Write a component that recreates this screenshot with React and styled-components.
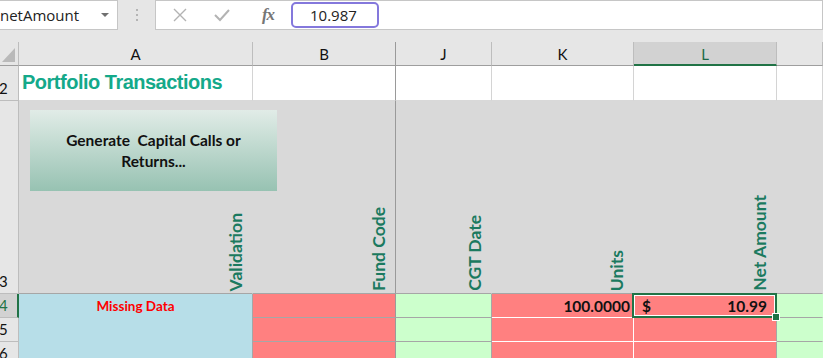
import React from 'react';
import styled, { createGlobalStyle } from 'styled-components';

const GlobalStyle = createGlobalStyle`
  html, body {
    margin: 0;
    padding: 0;
    background: #e6e6e6;
    overflow: hidden;
  }
  body {
    font-family: Lato, "Liberation Sans", sans-serif;
  }
`;

const Page = styled.div`
  width: 823px;
  height: 358px;
  overflow: hidden;
  background: #e6e6e6;
`;

const Toolbar = styled.div`
  height: 42px;
  box-sizing: border-box;
  padding-bottom: 12px;
`;

const FormulaBar = styled.div`
  display: flex;
  height: 30px;
`;

const NameBox = styled.div`
  width: 119px;
  margin-left: -1px;
  box-sizing: border-box;
  border: 1px solid #c6c6c6;
  background: #fff;
  display: flex;
  align-items: center;
  justify-content: space-between;
  padding-right: 8px;
  font-family: "Open Sans", "Noto Sans", sans-serif;
  font-size: 15px;
  color: #222;
`;

const DropArrow = styled.span`
  width: 0;
  height: 0;
  border-left: 4px solid transparent;
  border-right: 4px solid transparent;
  border-top: 4px solid #707070;
`;

const Grip = styled.div`
  width: 37px;
  display: flex;
  flex-direction: column;
  align-items: center;
  justify-content: center;
  gap: 3px;

  span {
    width: 2px;
    height: 2px;
    background: #b4b4b4;
  }
`;

const FormulaArea = styled.div`
  flex: 1;
  box-sizing: border-box;
  border: 1px solid #c6c6c6;
  background: #fff;
  display: flex;
  align-items: center;
  padding-left: 9px;
`;

const IconSlot = styled.div`
  width: ${(p) => p.$w}px;
  display: flex;
  justify-content: center;
  align-items: center;
`;

const Fx = styled.span`
  font-family: "Liberation Serif", serif;
  font-style: italic;
  font-weight: bold;
  font-size: 17px;
  color: #767676;
  letter-spacing: -1px;
`;

const FormulaInput = styled.div`
  width: 88px;
  height: 26px;
  margin-left: 4px;
  box-sizing: border-box;
  border: 2px solid #8478dc;
  border-radius: 5px;
  display: flex;
  align-items: center;
  padding-left: 17px;
  font-family: "Open Sans", "Noto Sans", sans-serif;
  font-size: 15px;
  color: #222;
`;

const Sheet = styled.div`
  display: grid;
  grid-template-columns: 19px 234px 143px 96px 142px 143px 1fr;
  grid-template-rows: 24px 35px 193px 24px 24px 24px;
`;

const Cell = styled.div`
  box-sizing: border-box;
  position: relative;
  min-width: 0;
  background: ${(p) => p.$bg || '#fff'};
  border-right: 1px solid ${(p) => p.$rc || '#d4d4d4'};
  border-bottom: 1px solid ${(p) => p.$bc || '#d4d4d4'};
  grid-row: ${(p) => p.$rows || 'auto'};
`;

const Corner = styled.div`
  box-sizing: border-box;
  background: #e6e6e6;
  border-right: 1px solid #bdbdbd;
  border-bottom: 1px solid #9e9e9e;
  position: relative;

  &::after {
    content: '';
    position: absolute;
    right: 3px;
    bottom: 3px;
    width: 13px;
    height: 14px;
    background: #b9b9b9;
    clip-path: polygon(100% 0, 100% 100%, 0 100%);
  }
`;

const ColHead = styled.div`
  box-sizing: border-box;
  background: ${(p) => (p.$active ? '#d2d2d2' : '#e6e6e6')};
  border-right: 1px solid ${(p) => p.$rc || '#bdbdbd'};
  border-bottom: ${(p) => (p.$active ? '2px solid #217346' : '1px solid #9e9e9e')};
  display: flex;
  align-items: center;
  justify-content: center;
  font-size: 15px;
  color: ${(p) => (p.$active ? '#1d6a48' : '#111')};
  padding-top: ${(p) => (p.$active ? '1px' : '0')};
`;

const RowHead = styled.div`
  box-sizing: border-box;
  background: ${(p) => (p.$active ? '#d2d2d2' : '#e6e6e6')};
  border-right: ${(p) => (p.$active ? '2px solid #217346' : '1px solid #bdbdbd')};
  border-bottom: 1px solid #bdbdbd;
  display: flex;
  align-items: flex-end;
  padding-bottom: 3px;
  overflow: hidden;
  font-size: 15px;
  color: ${(p) => (p.$active ? '#217346' : '#111')};

  span {
    margin-left: -1px;
  }
`;

const Title = styled(Cell)`
  display: flex;
  align-items: flex-end;
  padding: 0 0 6px 3px;
  font-family: "Liberation Sans", Arial, sans-serif;
  font-weight: bold;
  font-size: 20px;
  letter-spacing: -0.5px;
  color: #14a98a;
  white-space: nowrap;
`;

const HeaderCell = styled(Cell)`
  display: flex;
  justify-content: flex-end;
  align-items: flex-end;
  padding: 0 8px 2px 0;
`;

const VLabel = styled.span`
  writing-mode: vertical-rl;
  transform: rotate(180deg);
  font-weight: bold;
  font-size: 17.5px;
  line-height: 16px;
  color: #1b7a5f;
  white-space: nowrap;
`;

const MacroButton = styled.div`
  position: absolute;
  left: 11px;
  top: 9px;
  width: 247px;
  height: 81px;
  z-index: 2;
  background: linear-gradient(to bottom, #e1ece7, #97c2b2);
  display: flex;
  align-items: center;
  justify-content: center;
  text-align: center;
  font-weight: bold;
  font-size: 15.5px;
  line-height: 21px;
  color: #111;
  white-space: pre-wrap;
  padding: 0 16px;
  box-sizing: border-box;
`;

const Note = styled(Cell)`
  display: flex;
  justify-content: center;
  padding-top: 4px;
  font-weight: bold;
  font-size: 13.5px;
  color: #ff0000;
`;

const Value = styled(Cell)`
  display: flex;
  align-items: center;
  justify-content: ${(p) => p.$justify || 'flex-end'};
  padding: 0 ${(p) => p.$pr || 3}px 0 8px;
  font-weight: bold;
  font-size: 15.5px;
  color: #111;
`;

const Selection = styled.div`
  position: absolute;
  top: -1px;
  left: -2px;
  right: -1px;
  bottom: -1px;
  border: 2px solid #217346;
  box-shadow: inset 0 0 0 1px #fff;
  pointer-events: none;
  z-index: 3;

  &::after {
    content: '';
    position: absolute;
    right: -5px;
    bottom: -5px;
    width: 6px;
    height: 6px;
    background: #217346;
    border: 1px solid #fff;
  }
`;

const GRAY = '#d9d9d9';
const RED = '#ff8080';
const GREEN = '#ccffcc';
const BLUE = '#b7dee8';
const LINE = '#a6a6a6';
const DIVIDER = '#9a9a9a';

const CloseIcon = () => (
  <svg width="16" height="16" viewBox="0 0 16 16">
    <path d="M2 2 L14 14 M14 2 L2 14" stroke="#b3b3b3" strokeWidth="1.4" fill="none" />
  </svg>
);

const CheckIcon = () => (
  <svg width="18" height="16" viewBox="0 0 18 16">
    <path d="M2 8 L7 13 L16 3" stroke="#b3b3b3" strokeWidth="2" fill="none" />
  </svg>
);

const columns = ['A', 'B', 'J', 'K', 'L'];

const App = () => {
  return (
    <Page>
      <GlobalStyle />
      <Toolbar>
        <FormulaBar>
          <NameBox>
            <span>netAmount</span>
            <DropArrow />
          </NameBox>
          <Grip>
            <span />
            <span />
            <span />
          </Grip>
          <FormulaArea>
            <IconSlot $w={30}>
              <CloseIcon />
            </IconSlot>
            <IconSlot $w={54}>
              <CheckIcon />
            </IconSlot>
            <IconSlot $w={38}>
              <Fx>fx</Fx>
            </IconSlot>
            <FormulaInput>10.987</FormulaInput>
          </FormulaArea>
        </FormulaBar>
      </Toolbar>

      <Sheet>
        <Corner />
        {columns.map((col) => (
          <ColHead key={col} $active={col === 'L'} $rc={col === 'B' ? DIVIDER : undefined}>
            {col}
          </ColHead>
        ))}
        <ColHead />

        <RowHead><span>2</span></RowHead>
        <Title $bc={GRAY}>Portfolio Transactions</Title>
        <Cell $rc={DIVIDER} $bc={GRAY} />
        <Cell $bc={GRAY} />
        <Cell $bc={GRAY} />
        <Cell $bc={GRAY} />
        <Cell $bc={GRAY} />

        <RowHead><span>3</span></RowHead>
        <HeaderCell $bg={GRAY} $rc={GRAY} $bc={LINE}>
          <MacroButton>{'Generate  Capital Calls or\nReturns...'}</MacroButton>
          <VLabel>Validation</VLabel>
        </HeaderCell>
        <HeaderCell $bg={GRAY} $rc={DIVIDER} $bc={LINE}>
          <VLabel>Fund Code</VLabel>
        </HeaderCell>
        <HeaderCell $bg={GRAY} $rc={GRAY} $bc={LINE}>
          <VLabel>CGT Date</VLabel>
        </HeaderCell>
        <HeaderCell $bg={GRAY} $rc={GRAY} $bc={LINE}>
          <VLabel>Units</VLabel>
        </HeaderCell>
        <HeaderCell $bg={GRAY} $rc={GRAY} $bc={LINE}>
          <VLabel>Net Amount</VLabel>
        </HeaderCell>
        <Cell $bg={GRAY} $rc={GRAY} $bc={LINE} />

        <RowHead $active><span>4</span></RowHead>
        <Note $bg={BLUE} $rc={LINE} $bc={BLUE} $rows="span 3">Missing Data</Note>
        <Cell $bg={RED} $rc={DIVIDER} $bc={LINE} />
        <Cell $bg={GREEN} $rc={LINE} $bc={LINE} />
        <Value $bg={RED} $rc="#fff" $bc="#fff">100.0000</Value>
        <Value $bg={RED} $rc={LINE} $bc="#fff" $justify="space-between" $pr={9}>
          <span>$</span>
          <span>10.99</span>
          <Selection />
        </Value>
        <Cell $bg={GREEN} $rc={GREEN} $bc={LINE} />

        {[5, 6].map((n) => (
          <React.Fragment key={n}>
            <RowHead><span>{n}</span></RowHead>
            <Cell $bg={RED} $rc={DIVIDER} $bc={LINE} />
            <Cell $bg={GREEN} $rc={LINE} $bc={LINE} />
            <Cell $bg={RED} $rc="#fff" $bc="#fff" />
            <Cell $bg={RED} $rc={LINE} $bc="#fff" />
            <Cell $bg={GREEN} $rc={GREEN} $bc={LINE} />
          </React.Fragment>
        ))}
      </Sheet>
    </Page>
  );
};

export default App;
